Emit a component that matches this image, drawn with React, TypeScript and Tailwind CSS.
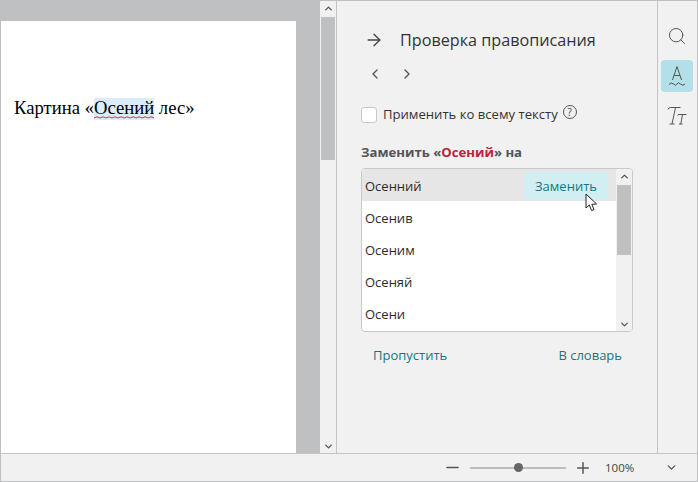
import { ChevronLeft, ChevronRight, ChevronUp, ChevronDown, ArrowRight, Search, Minus, Plus } from 'lucide-react';

const suggestions = ['Осенний', 'Осенив', 'Осеним', 'Осеняй', 'Осени'];

function Wave({ className }: { className?: string }) {
  return (
    <svg className={className} width="8" height="3" viewBox="0 0 60 3" preserveAspectRatio="none">
      <path d="M0 2 L3 0.7 L6 2 L9 0.7 L12 2 L15 0.7 L18 2 L21 0.7 L24 2 L27 0.7 L30 2 L33 0.7 L36 2 L39 0.7 L42 2 L45 0.7 L48 2 L51 0.7 L54 2 L57 0.7 L60 2" fill="none" stroke="#d9405c" strokeWidth="1" />
    </svg>
  );
}

function Cursor() {
  return (
    <svg className="absolute left-[223px] top-[24px]" width="14" height="20" viewBox="0 0 14 20">
      <path d="M1 1 L1 15 L4.3 12 L6.6 17.6 L9 16.6 L6.8 11.3 L11.6 11 Z" fill="#fff" stroke="#222" strokeWidth="1" strokeLinejoin="round" />
    </svg>
  );
}

export default function App() {
  return (
    <div className="w-[698px] h-[482px] flex flex-col border border-[#bfc0c2] bg-[#f1f1f1] overflow-hidden font-['Open_Sans','Noto_Sans',sans-serif] text-[#333]">
      <div className="flex flex-1 min-h-0">
        {/* Document */}
        <div className="w-[319px] bg-[#bfc0c2] pt-5 overflow-hidden">
          <div className="w-[295px] h-full bg-white pl-[13px] pt-[75px] font-['Liberation_Serif',serif] text-[18.67px] leading-[24px] text-black whitespace-nowrap">
            Картина «
            <span className="relative inline-block bg-[#dbedfc] h-[22px] leading-[20px]">
              Осений
              <Wave className="absolute left-0 bottom-[1px] w-full" />
            </span>
            {' '}лес»
          </div>
        </div>

        {/* Scrollbar */}
        <div className="w-4 flex flex-col items-center px-px">
          <ChevronUp size={11} strokeWidth={3} className="mt-[2px] mb-[3px] text-[#555] shrink-0" />
          <div className="w-full h-[143px] bg-[#bfc0c2] shrink-0" />
          <div className="flex-1" />
          <ChevronDown size={11} strokeWidth={3} className="mb-[1px] text-[#555] shrink-0" />
        </div>

        {/* Spellcheck panel */}
        <div className="w-[322px] border-l border-r border-[#c4c4c4] pl-[24px] pr-6">
          <div className="flex items-center h-[36px] mt-[21px] gap-[16px] pl-[4px]">
            <ArrowRight size={20} strokeWidth={1.6} className="text-[#444] shrink-0 -ml-[1px]" />
            <span className="text-[16.2px] text-[#333]">Проверка правописания</span>
          </div>
          <div className="flex items-center gap-[16px] h-[20px] mt-[6px] ml-[6px] text-[#555]">
            <ChevronLeft size={16} strokeWidth={2} />
            <ChevronRight size={16} strokeWidth={2} />
          </div>
          <div className="flex items-center mt-[21px] h-[20px]">
            <div className="w-4 h-4 bg-white border border-[#c9c9c9] rounded-[3px] mr-[6px] shrink-0" />
            <span className="text-[13.1px] text-[#333]">Применить ко всему тексту</span>
            <span className="ml-[5px] -mt-[6px] w-[14px] h-[14px] rounded-full border border-[#555] text-[10px] leading-[12px] text-center text-[#444]">?</span>
          </div>
          <div className="mt-[18px] text-[13.15px] leading-[18px] font-bold text-[#555]">
            Заменить «<span className="text-[#b8243c]">Осений</span>» на
          </div>

          <div className="relative mt-[7px] w-[272px] h-[164px] bg-white border border-[#c9c9c9] rounded-[4px] flex overflow-hidden">
            <div className="flex-1">
              {suggestions.map((s, i) => (
                <div key={s} className={`h-8 flex items-center pl-[3px] pt-1 text-[13px] text-[#2b2b2b] ${i === 0 ? 'bg-[#e6e6e6]' : ''}`}>
                  {s}
                </div>
              ))}
            </div>
            <div className="w-4 bg-[#f1f1f1] flex flex-col items-center">
              <ChevronUp size={11} strokeWidth={3} className="mt-[2px] mb-[3px] text-[#555] shrink-0" />
              <div className="w-[14px] h-[70px] bg-[#bfc0c2] shrink-0" />
              <div className="flex-1" />
              <ChevronDown size={11} strokeWidth={3} className="mb-[1px] text-[#555] shrink-0" />
            </div>
            <div className="absolute left-[162px] top-[3px] w-[84px] h-7 rounded-[3px] bg-[#d1eef2] text-[13px] leading-[28px] text-center text-[#167584]">
              Заменить
            </div>
            <Cursor />
          </div>

          <div className="flex justify-between mt-[14px] pl-3 pr-[11px] w-[272px] text-[13px] text-[#167584]">
            <span>Пропустить</span>
            <span>В словарь</span>
          </div>
        </div>

        {/* Side rail */}
        <div className="flex-1 flex flex-col items-center pt-[25px] pr-[2px] text-[#555]">
          <Search size={20} strokeWidth={1.2} className="mb-[14px]" />
          <div className="w-8 h-8 bg-[#b2dfe8] rounded-[4px] flex items-center justify-center">
            <svg width="20" height="24" viewBox="0 0 20 24" fill="none" stroke="#555" strokeWidth="1">
              <path d="M5.5 16 L10 2.5 L14.5 16 M7 11.5 H13" />
              <path d="M2 20.5 Q4 17.5 6.5 20 T10 20 T13.5 20 T18 20" />
            </svg>
          </div>
          <svg className="mt-[14px]" width="20" height="20" viewBox="0 0 20 20" fill="none" stroke="#555" strokeWidth="1">
            <path d="M1 3.5 Q1.5 1.5 3.5 1.5 H13.5 M8.5 1.5 L5 18 M2.5 18 H7.5" />
            <path d="M10.5 9.5 Q11 8.5 12 8.5 H19.5 M15.5 8.5 L13.8 18 M12 18 H15.5" />
          </svg>
        </div>
      </div>

      {/* Status bar */}
      <div className="h-[28px] border-t border-[#c4c4c4] flex items-center text-[#555] shrink-0">
        <div className="flex-1" />
        <Minus size={19} strokeWidth={2} className="mr-[8px]" />
        <div className="relative w-24 h-[2px] bg-[#bdbdbd] mr-[8px]">
          <div className="absolute left-[44px] -top-1 w-[9px] h-[9px] rounded-full bg-[#666]" />
        </div>
        <Plus size={18} strokeWidth={2} className="mr-[13px]" />
        <span className="w-[60px] text-[11.5px] text-[#444]">100%</span>
        <ChevronDown size={13} strokeWidth={2.5} className="mr-[19px]" />
      </div>
    </div>
  );
}
